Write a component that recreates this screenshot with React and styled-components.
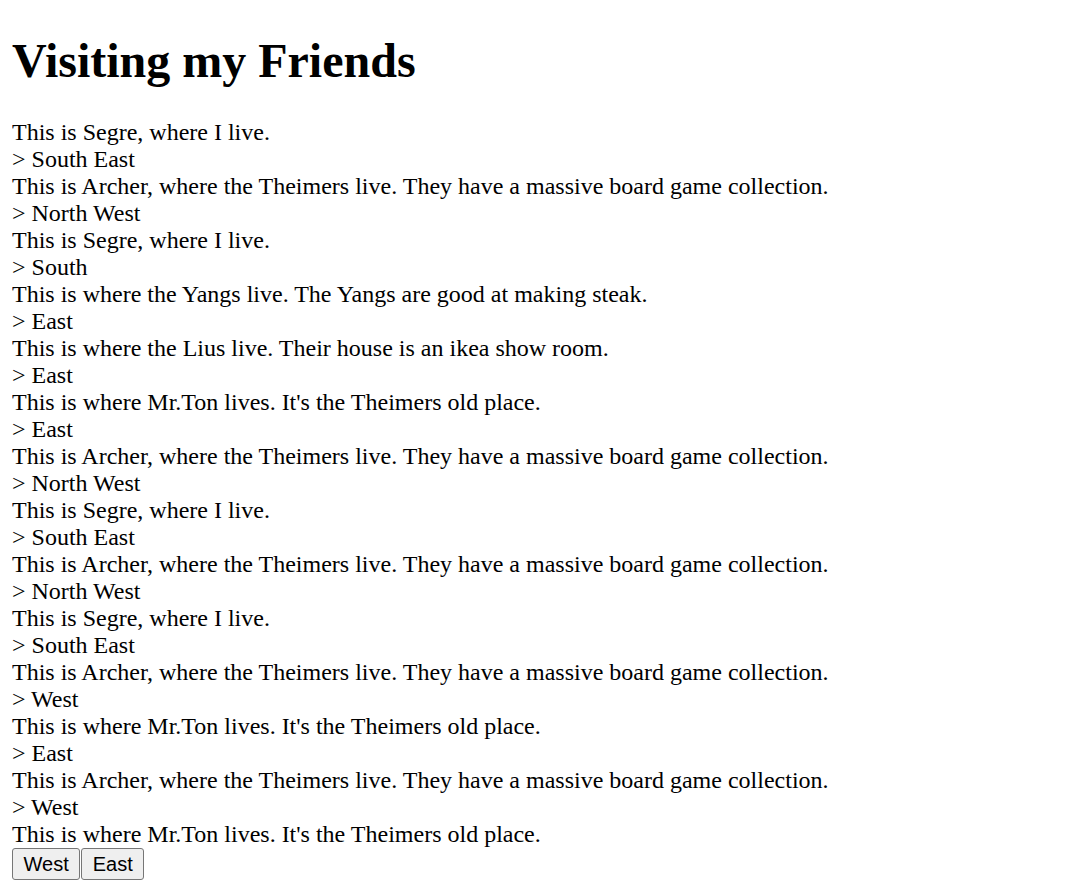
import React from 'react';
import styled, { createGlobalStyle } from 'styled-components';

const GlobalStyle = createGlobalStyle`
    body {
        margin: 12px;
        background: #ffffff;
        color: #000000;
        font-family: "Liberation Serif", "Times New Roman", serif;
        font-size: 24px;
    }
`;

const Title = styled.h1`
    font-size: 48px;
    font-weight: bold;
    margin: 22px 0 32px;
    line-height: 53px;
`;

const Line = styled.div`
    line-height: 27px;
`;

const Controls = styled.div`
    display: flex;
    gap: 1px;
`;

const NavButton = styled.button`
    height: 32px;
    padding: 0 10.5px;
    font-family: "Liberation Sans", Arial, sans-serif;
    font-size: 20px;
    color: #000000;
    background-color: #efefef;
    border: 1px solid #767676;
    border-radius: 3px;
    cursor: pointer;
`;

const lines = [
    "This is Segre, where I live.",
    "> South East",
    "This is Archer, where the Theimers live. They have a massive board game collection.",
    "> North West",
    "This is Segre, where I live.",
    "> South",
    "This is where the Yangs live. The Yangs are good at making steak.",
    "> East",
    "This is where the Lius live. Their house is an ikea show room.",
    "> East",
    "This is where Mr.Ton lives. It's the Theimers old place.",
    "> East",
    "This is Archer, where the Theimers live. They have a massive board game collection.",
    "> North West",
    "This is Segre, where I live.",
    "> South East",
    "This is Archer, where the Theimers live. They have a massive board game collection.",
    "> North West",
    "This is Segre, where I live.",
    "> South East",
    "This is Archer, where the Theimers live. They have a massive board game collection.",
    "> West",
    "This is where Mr.Ton lives. It's the Theimers old place.",
    "> East",
    "This is Archer, where the Theimers live. They have a massive board game collection.",
    "> West",
    "This is where Mr.Ton lives. It's the Theimers old place.",
];

const App = () => {
    return (
        <>
            <GlobalStyle />
            <Title>Visiting my Friends</Title>
            {lines.map((text, i) => (
                <Line key={i}>{text}</Line>
            ))}
            <Controls>
                <NavButton>West</NavButton>
                <NavButton>East</NavButton>
            </Controls>
        </>
    );
};

export default App;
